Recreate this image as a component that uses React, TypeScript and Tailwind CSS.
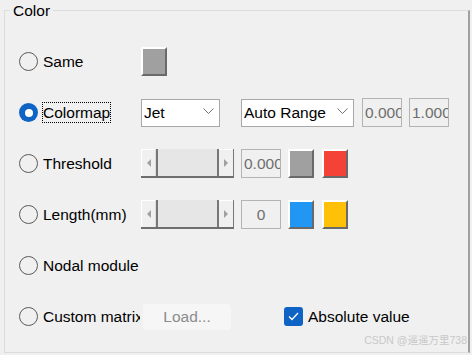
import React from "react";

const font = { fontFamily: '"Liberation Sans", Arial, sans-serif' };

function Radio({ checked }: { checked?: boolean }) {
  if (checked) {
    return (
      <span className="flex h-[19px] w-[19px] items-center justify-center rounded-full bg-[#0f63c4]">
        <span className="h-[8px] w-[8px] rounded-full bg-white" />
      </span>
    );
  }
  return <span className="block h-[19px] w-[19px] rounded-full border border-[#5a5a5a]" />;
}

function Swatch({ color }: { color: string }) {
  return (
    <span
      className="block h-[29px] w-[26px] border-t-2 border-l-2 border-b-2 border-r-2 border-t-white border-l-white border-b-[#696969] border-r-[#696969]"
      style={{ backgroundColor: color }}
    />
  );
}

function Select({ label, width }: { label: string; width: string }) {
  return (
    <div className={`flex h-[28px] items-center justify-between border border-[#a8a8a8] bg-white pl-[2px] pr-[5px] ${width}`}>
      <span className="text-[15.5px] text-black">{label}</span>
      <svg width="11" height="7" viewBox="0 0 11 7" className="mt-[-2px]">
        <path d="M0.5 0.5 L5.5 5.5 L10.5 0.5" fill="none" stroke="#707070" strokeWidth="1" />
      </svg>
    </div>
  );
}

function NumBox({ value, center }: { value: string; center?: boolean }) {
  return (
    <div
      className={`flex h-[29px] w-[40px] items-center overflow-hidden whitespace-nowrap border border-[#b4b4b4] bg-[#f0f0f0] text-[15.5px] text-[#6e6e6e] ${center ? "justify-center" : "pl-[2px]"}`}
    >
      {value}
    </div>
  );
}

function Slider() {
  return (
    <div className="flex h-[29px] w-[93px] border-b-2 border-[#6e6e6e] bg-[#f0f0f0]">
      <div className="flex w-[15px] items-center justify-center border-t border-l border-white border-r border-r-[#dcdcdc]">
        <svg width="4" height="8" viewBox="0 0 4 8">
          <path d="M4 0 L0 4 L4 8 Z" fill="#a0a0a0" />
        </svg>
      </div>
      <div className="flex-1 border-l-2 border-l-[#777] border-r-2 border-r-[#777] bg-[#e6e6e6]" />
      <div className="flex w-[14px] items-center justify-center border-t border-white">
        <svg width="4" height="8" viewBox="0 0 4 8">
          <path d="M0 0 L4 4 L0 8 Z" fill="#a0a0a0" />
        </svg>
      </div>
      <div className="w-[1px] bg-[#777]" />
    </div>
  );
}

function Row({ label, checked, focus, children }: { label: string; checked?: boolean; focus?: boolean; children?: React.ReactNode }) {
  return (
    <div className="flex h-[51px] items-center">
      <div className="flex w-[136px] items-center pl-[14px]">
        <Radio checked={checked} />
        <span
          className={`ml-[5px] whitespace-nowrap text-[15.5px] leading-[19px] text-black ${focus ? "outline-1 outline-dotted outline-black" : ""}`}
        >
          {label}
        </span>
      </div>
      {children}
    </div>
  );
}

export default function App() {
  return (
    <div className="h-[355px] w-[472px] overflow-hidden bg-[#f0f0f0] pl-[4px] pt-[10px]" style={font}>
      <div className="relative h-[343px] w-[466px] border-t border-l border-b border-[#dcdcdc] border-r-2 border-r-[#a0a0a0]">
        <span className="absolute left-[5px] top-[-9px] bg-[#f0f0f0] px-[3px] text-[15.5px] leading-[17px] text-black">
          Color
        </span>
        <div className="flex flex-col pt-[25px]">
          <Row label="Same">
            <Swatch color="#a0a0a0" />
          </Row>
          <Row label="Colormap" checked focus>
            <Select label="Jet" width="w-[79px]" />
            <div className="ml-[21px]">
              <Select label="Auto Range" width="w-[113px]" />
            </div>
            <div className="ml-[8px]">
              <NumBox value="0.000" />
            </div>
            <div className="ml-[7px]">
              <NumBox value="1.000" />
            </div>
          </Row>
          <Row label="Threshold">
            <Slider />
            <div className="ml-[7px]">
              <NumBox value="0.000" />
            </div>
            <div className="ml-[7px]">
              <Swatch color="#a0a0a0" />
            </div>
            <div className="ml-[8px]">
              <Swatch color="#f44336" />
            </div>
          </Row>
          <Row label="Length(mm)">
            <Slider />
            <div className="ml-[7px]">
              <NumBox value="0" center />
            </div>
            <div className="ml-[7px]">
              <Swatch color="#2196f3" />
            </div>
            <div className="ml-[8px]">
              <Swatch color="#ffc107" />
            </div>
          </Row>
          <Row label="Nodal module" />
          <div className="flex h-[51px] items-center">
            <div className="flex w-[138px] items-center pl-[14px]">
              <Radio />
              <span className="ml-[5px] w-[97px] overflow-hidden whitespace-nowrap text-[15.5px] leading-[19px] text-black">
                Custom matrix
              </span>
            </div>
            <div className="flex h-[26px] w-[88px] items-center justify-center rounded-[4px] bg-[#f6f6f6] text-[15.5px] text-[#8c8c8c]">
              Load...
            </div>
            <div className="ml-[53px] flex h-[19px] w-[19px] items-center justify-center rounded-[3px] bg-[#0f63c4]">
              <svg width="11" height="9" viewBox="0 0 11 9">
                <path d="M1 4.5 L4 7.5 L10 1" fill="none" stroke="white" strokeWidth="1.3" />
              </svg>
            </div>
            <span className="ml-[5px] text-[15.5px] text-black">Absolute value</span>
          </div>
        </div>
        <span
          className="absolute bottom-[3px] right-[1px] text-[10.5px] text-[#c8c8c8]"
          style={{ fontFamily: '"Liberation Sans", "Noto Sans CJK SC", sans-serif' }}
        >
          CSDN @遥遥万里738
        </span>
      </div>
    </div>
  );
}
